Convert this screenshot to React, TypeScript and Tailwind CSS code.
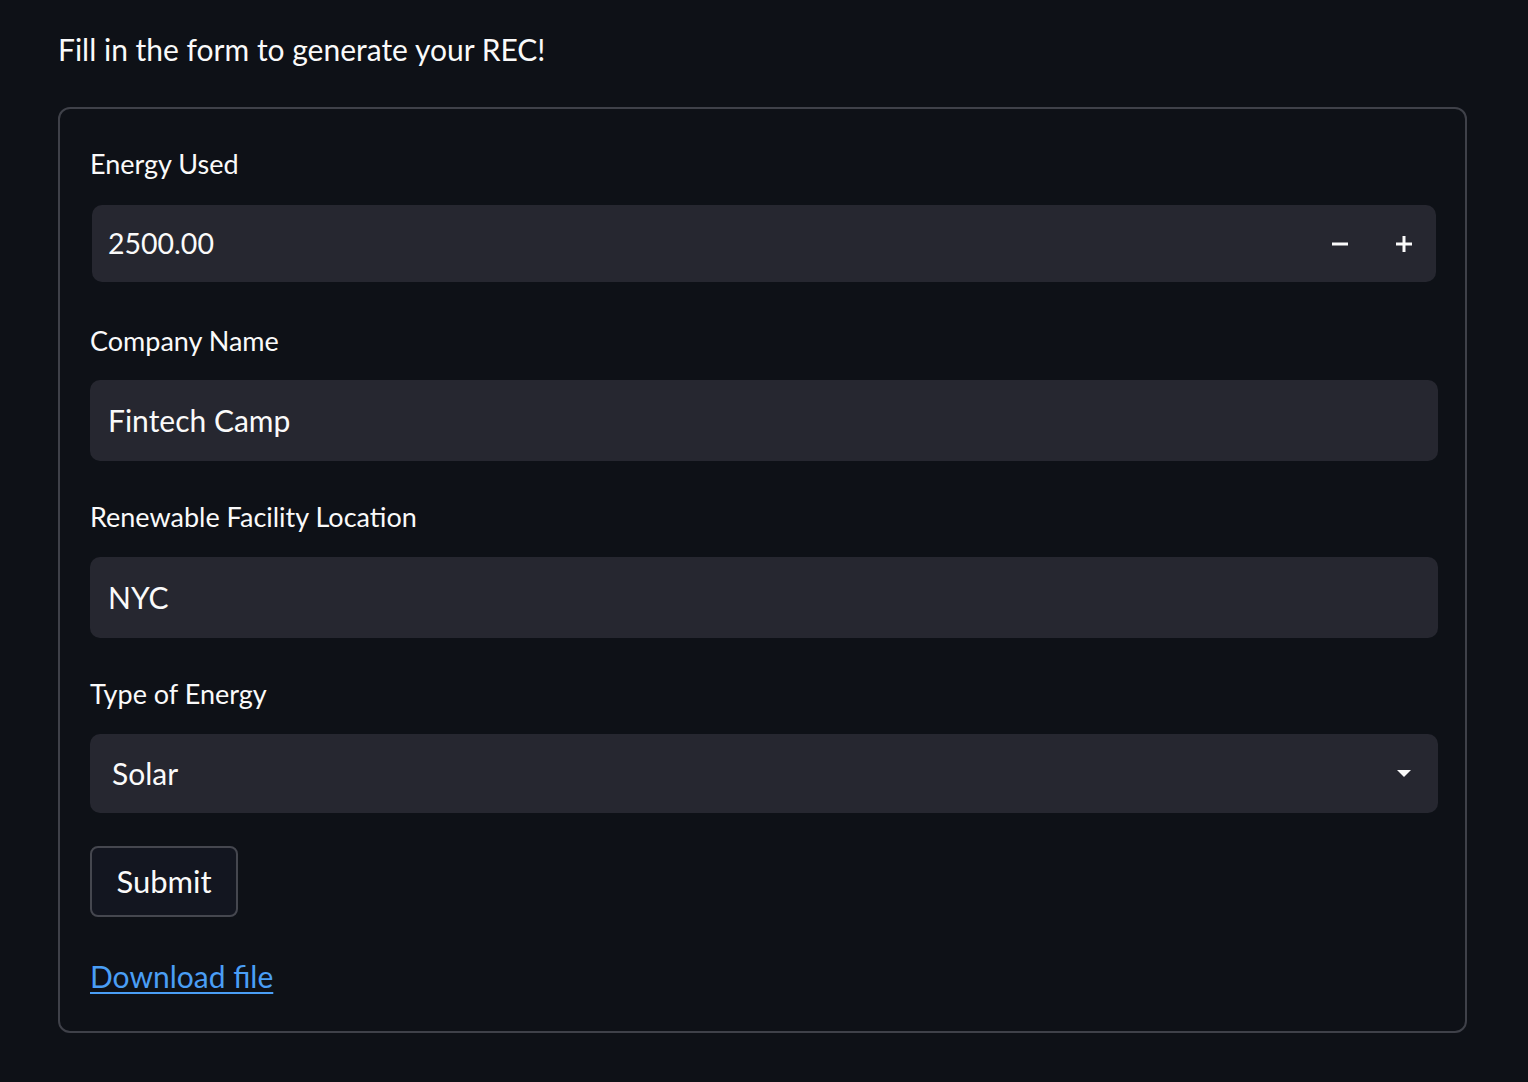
import React from "react";

const font = { fontFamily: "Lato, 'Noto Sans', sans-serif" };

function Label({ children }: { children: React.ReactNode }) {
  return (
    <div className="h-[36px] flex items-center text-[27px] leading-[36px] text-[#fafafa]">
      {children}
    </div>
  );
}

export default function App() {
  return (
    <div
      className="min-h-[1082px] w-full bg-[#0e1117] text-[#fafafa] pt-[29px] pl-[58px] pr-[61px]"
      style={font}
    >
      <div className="h-[40px] flex items-center text-[30px] leading-[40px]">
        Fill in the form to generate your REC!
      </div>
      <div className="mt-[38px] border-2 border-[#3f4149] rounded-[12px] pl-[30px] pr-[27px] pt-[37px] pb-[35px] flex flex-col">
        <Label>Energy Used</Label>
        <div className="mt-[23px] mx-[2px] h-[77px] rounded-[10px] bg-[#262730] flex items-center pl-[16px]">
          <span className="flex-1 text-[28.5px]">2500.00</span>
          <div className="flex items-center h-full">
            <button className="w-[64px] h-full flex items-center justify-center">
              <svg width="16" height="16" viewBox="0 0 16 16">
                <rect x="0" y="6.5" width="16" height="3" fill="#fafafa" />
              </svg>
            </button>
            <button className="w-[64px] h-full flex items-center justify-center">
              <svg width="16" height="16" viewBox="0 0 16 16">
                <rect x="0" y="6.5" width="16" height="3" fill="#fafafa" />
                <rect x="6.5" y="0" width="3" height="16" fill="#fafafa" />
              </svg>
            </button>
          </div>
        </div>

        <div className="mt-[41px]">
          <Label>Company Name</Label>
        </div>
        <div className="mt-[21px] h-[81px] rounded-[10px] bg-[#262730] flex items-center pl-[18px] text-[30px]">
          Fintech Camp
        </div>

        <div className="mt-[38px]">
          <Label>Renewable Facility Location</Label>
        </div>
        <div className="mt-[22px] h-[81px] rounded-[10px] bg-[#262730] flex items-center pl-[18px] text-[30px]">
          NYC
        </div>

        <div className="mt-[38px]">
          <Label>Type of Energy</Label>
        </div>
        <div className="mt-[22px] h-[79px] rounded-[10px] bg-[#262730] flex items-center pl-[22px] pr-[27px] text-[30px]">
          <span className="flex-1">Solar</span>
          <svg width="14" height="8" viewBox="0 0 14 8">
            <polygon points="0,0 14,0 7,7" fill="#fafafa" />
          </svg>
        </div>

        <div className="mt-[33px]">
          <button className="h-[71px] w-[148px] rounded-[8px] border-2 border-[#45474f] bg-[#131620] text-[31px] text-[#fafafa] flex items-center justify-center">
            Submit
          </button>
        </div>

        <div className="mt-[39px] h-[40px] flex items-center">
          <a className="text-[30px] text-[#4a9ef5] underline underline-offset-[4px] decoration-2">
            Download file
          </a>
        </div>
      </div>
    </div>
  );
}
